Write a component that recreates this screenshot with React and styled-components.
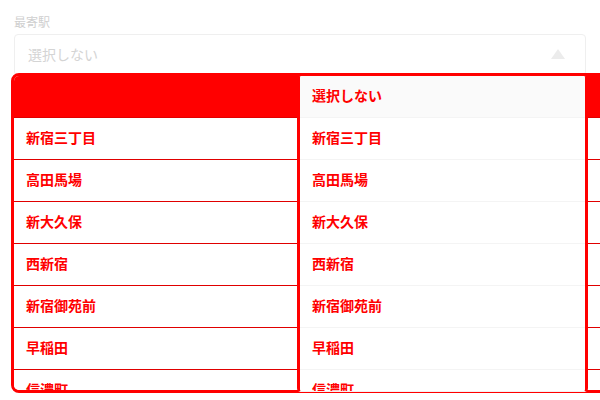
import React from "react";
import styled, { createGlobalStyle } from "styled-components";

const stations = ["新宿三丁目", "高田馬場", "新大久保", "西新宿", "新宿御苑前", "早稲田", "信濃町"];

function Options({ variant }) {
  return (
    <>
      <Option $variant={variant} $selected>選択しない</Option>
      {stations.map((s) => (
        <Option key={s} $variant={variant}>{s}</Option>
      ))}
    </>
  );
}

export default function App() {
  return (
    <Page>
      <GlobalStyle />
      <Label>最寄駅</Label>
      <SelectWrap>
        <SelectBox>
          <Placeholder>選択しない</Placeholder>
          <Arrow />
        </SelectBox>
        <BackMenu>
          <Options variant="back" />
        </BackMenu>
        <FrontMenu>
          <Options variant="front" />
        </FrontMenu>
      </SelectWrap>
    </Page>
  );
}

const GlobalStyle = createGlobalStyle`
  html, body {
    margin: 0;
    background: #fff;
    overflow: hidden;
  }
  body {
    font-family: "Noto Sans CJK JP", "Noto Sans", sans-serif;
  }
`;

const Page = styled.div`
  width: 600px;
  height: 400px;
  padding: 14px 14px 0;
  box-sizing: border-box;
  overflow: hidden;
`;

const Label = styled.div`
  font-size: 12px;
  line-height: 16px;
  color: #cfcfcf;
  margin-bottom: 4px;
`;

const SelectWrap = styled.div`
  position: relative;
  width: 572px;
`;

const SelectBox = styled.div`
  height: 42px;
  border: 1px solid #efefef;
  border-radius: 4px;
  box-sizing: border-box;
  display: flex;
  align-items: center;
  justify-content: space-between;
  padding: 0 20px 2px 13px;
`;

const Placeholder = styled.span`
  font-size: 14px;
  color: #d4d4d4;
`;

const Arrow = styled.span`
  width: 0;
  height: 0;
  border-left: 7px solid transparent;
  border-right: 7px solid transparent;
  border-bottom: 10px solid #ececec;
`;

const BackMenu = styled.div`
  position: absolute;
  top: 39px;
  left: -3px;
  width: 620px;
  height: 320px;
  box-sizing: border-box;
  border: 3px solid #ff0000;
  border-radius: 8px;
  background: #fff;
  overflow: hidden;
`;

const FrontMenu = styled.div`
  position: absolute;
  top: 42px;
  left: 283px;
  width: 291px;
  height: 316px;
  box-sizing: border-box;
  border-left: 3px solid #ff0000;
  border-right: 3px solid #ff0000;
  border-bottom: 1px solid #f2f2f2;
  border-radius: 4px;
  background: #fff;
  overflow: hidden;
`;

const Option = styled.div`
  height: 42px;
  box-sizing: border-box;
  display: flex;
  align-items: center;
  padding: 0 0 4px 12px;
  font-size: 14px;
  font-weight: 700;
  color: #ff0000;
  border-bottom: 1px solid ${(p) => (p.$variant === "back" ? "#e00000" : "#f4f4f4")};
  background: ${(p) =>
    p.$selected ? (p.$variant === "back" ? "#ff0000" : "#fafafa") : "#fff"};
`;
